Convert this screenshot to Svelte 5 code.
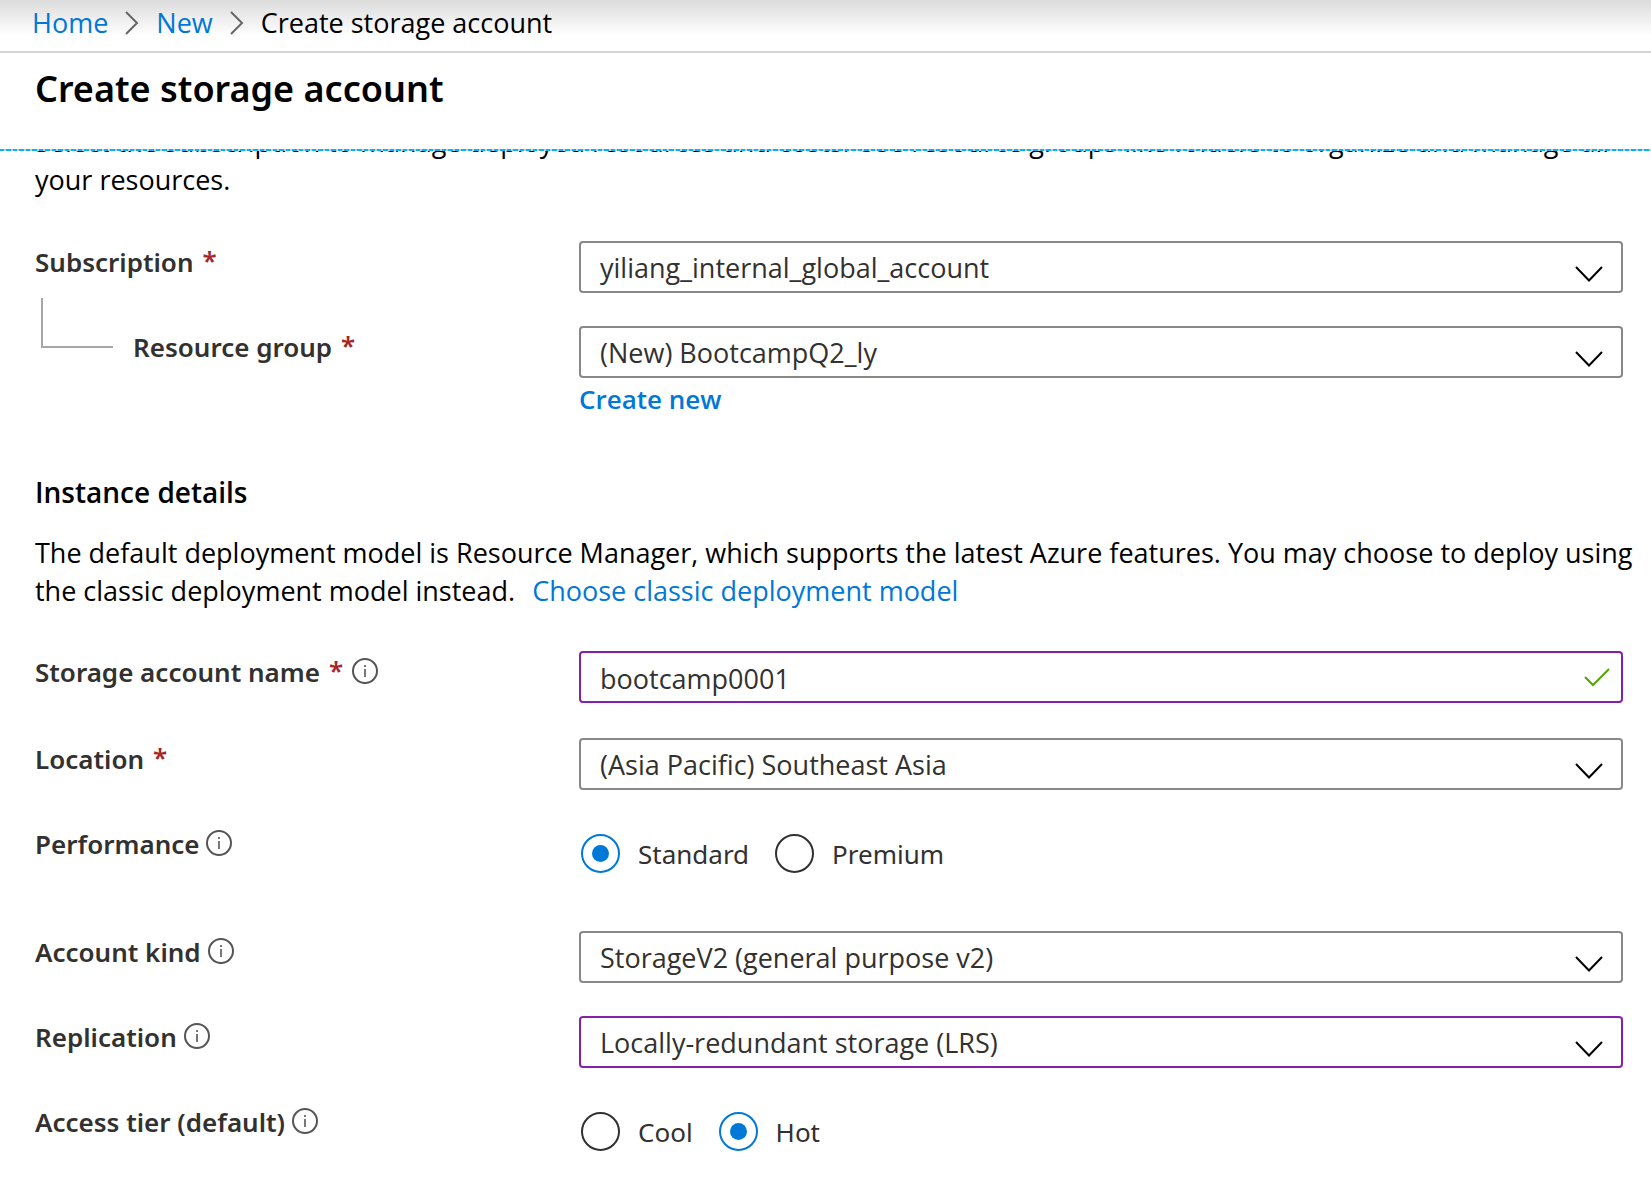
<script>
  let subscription = $state('yiliang_internal_global_account');
  let resourceGroup = $state('(New) BootcampQ2_ly');
  let accountName = $state('bootcamp0001');
  let location = $state('(Asia Pacific) Southeast Asia');
  let performance = $state('Standard');
  let kind = $state('StorageV2 (general purpose v2)');
  let replication = $state('Locally-redundant storage (LRS)');
  let tier = $state('Hot');
</script>

{#snippet info(topic)}
  <button type="button" class="info" aria-label="About {topic}">
    <svg viewBox="0 0 26 26" aria-hidden="true">
      <circle cx="13" cy="13" r="12" />
      <path d="M13 11v8M13 7v2" />
    </svg>
  </button>
{/snippet}

{#snippet chevron()}
  <svg class="chevron" viewBox="0 0 30 18" aria-hidden="true"><path d="M2 2l13 13.500L28 2" /></svg>
{/snippet}

{#snippet separator()}
  <svg class="separator" viewBox="0 0 14 24" aria-hidden="true"><path d="M1 1l11 11L1 23" /></svg>
{/snippet}

<header>
  <nav aria-label="Breadcrumb">
    <a href="#home">Home</a>
    {@render separator()}
    <a href="#new">New</a>
    {@render separator()}
    <span>Create storage account</span>
  </nav>
  <h1>Create storage account</h1>
  <div class="edge"></div>
</header>

<main>
  <p class="intro">
    Select the subscription to manage deployed resources and costs. Use resource groups like folders to organize and manage all your resources.
  </p>

  <div class="fields project">
    <div class="row">
      <div class="label"><label for="subscription">Subscription</label><span class="required">*</span></div>
      <div class="control">
        <select id="subscription" bind:value={subscription}><option>yiliang_internal_global_account</option></select>
        {@render chevron()}
      </div>
    </div>
    <div class="row">
      <div class="label nested"><label for="group">Resource group</label><span class="required">*</span></div>
      <div>
        <div class="control">
          <select id="group" bind:value={resourceGroup}><option>(New) BootcampQ2_ly</option></select>
          {@render chevron()}
        </div>
        <a class="create" href="#create">Create new</a>
      </div>
    </div>
  </div>

  <h2>Instance details</h2>
  <p class="model">
    The default deployment model is Resource Manager, which supports the latest Azure features. You may choose to deploy using the classic deployment model instead.
    <a href="#classic">Choose classic deployment model</a>
  </p>

  <div class="fields">
    <div class="row name">
      <div class="label"><label for="name">Storage account name</label><span class="required">*</span>{@render info('storage account name')}</div>
      <div class="control">
        <input id="name" class="edited" type="text" bind:value={accountName} />
        <svg class="check" viewBox="0 0 28 20" aria-hidden="true"><path d="M2 10l8 8L26 2" /></svg>
      </div>
    </div>
    <div class="row">
      <div class="label"><label for="location">Location</label><span class="required">*</span></div>
      <div class="control">
        <select id="location" bind:value={location}><option>(Asia Pacific) Southeast Asia</option></select>
        {@render chevron()}
      </div>
    </div>
    <div class="row tall">
      <div class="label"><span id="performance">Performance</span>{@render info('performance')}</div>
      <div class="choices" role="radiogroup" aria-labelledby="performance">
        {#each ['Standard', 'Premium'] as option}
          <label><input type="radio" name="performance" value={option} bind:group={performance} />{option}</label>
        {/each}
      </div>
    </div>
    <div class="row">
      <div class="label"><label for="kind">Account kind</label>{@render info('account kind')}</div>
      <div class="control">
        <select id="kind" bind:value={kind}><option>StorageV2 (general purpose v2)</option></select>
        {@render chevron()}
      </div>
    </div>
    <div class="row">
      <div class="label"><label for="replication">Replication</label>{@render info('replication')}</div>
      <div class="control">
        <select id="replication" class="edited" bind:value={replication}><option>Locally-redundant storage (LRS)</option></select>
        {@render chevron()}
      </div>
    </div>
    <div class="row">
      <div class="label"><span id="tier">Access tier (default)</span>{@render info('access tier')}</div>
      <div class="choices" role="radiogroup" aria-labelledby="tier">
        {#each ['Cool', 'Hot'] as option}
          <label><input type="radio" name="tier" value={option} bind:group={tier} />{option}</label>
        {/each}
      </div>
    </div>
  </div>
</main>

<style>
  :global(body) {
    margin: 0;
    background: #fff;
    color: #000;
    font: 27px/38px 'Open Sans', 'Noto Sans', sans-serif;
  }

  svg {
    fill: none;
    stroke: currentColor;
  }

  a {
    color: #0078d7;
    text-decoration: none;
  }

  nav {
    display: flex;
    align-items: center;
    gap: 17px;
    height: 53px;
    padding: 0 32px 5px;
    box-sizing: border-box;
    border-bottom: 2px solid #d4d4d4;
    background: linear-gradient(#dcdcdc, #fff 36px);
  }

  .separator {
    width: 14px;
    height: 24px;
    color: #666;
    stroke-width: 2;
  }

  .edge {
    height: 2px;
    background: repeating-linear-gradient(90deg, #00b7f4 0 4px, #ccc 4px 6px, #00b7f4 6px 11px, #ccc 11px 13px);
  }

  h1 {
    margin: 0;
    padding: 12px 35px 36px;
    font-family: 'Noto Sans', sans-serif;
    font-size: 36px;
    font-weight: 600;
    line-height: 48px;
  }

  main {
    overflow: hidden;
    padding: 0 28px 24px 35px;
  }

  .intro {
    margin: -28px 0 0;
  }

  .project {
    margin-top: 42px;
  }

  .fields {
    display: flex;
    flex-direction: column;
    gap: 33px;
  }

  .row {
    display: grid;
    grid-template-columns: 544px 1fr;
    min-height: 52px;
  }

  .name {
    min-height: 54px;
  }

  .tall {
    min-height: 75px;
  }

  .label {
    display: flex;
    align-self: start;
    align-items: center;
    gap: 7px;
    padding-top: 2px;
    color: #323130;
    font-family: 'Noto Sans', sans-serif;
    font-size: 26px;
    font-weight: 600;
  }

  .required {
    padding: 0 2px 4px;
    color: #a4262c;
    line-height: 34px;
  }

  .nested {
    position: relative;
    padding-left: 98px;
  }

  .nested::before {
    content: '';
    position: absolute;
    left: 6px;
    bottom: 18px;
    width: 70px;
    height: 48px;
    border-left: 2px solid #a6a6a6;
    border-bottom: 2px solid #a6a6a6;
  }

  .info {
    width: 26px;
    height: 28px;
    padding: 0 0 2px;
    border: 0;
    background: none;
    color: #555;
  }

  .info svg {
    display: block;
    stroke-width: 2;
  }

  .info path {
    stroke: #777;
  }

  .control {
    position: relative;
  }

  select,
  input[type='text'] {
    display: block;
    box-sizing: border-box;
    width: 100%;
    height: 52px;
    padding: 2px 60px 0 19px;
    border: 2px solid #8a8886;
    border-radius: 4px;
    appearance: none;
    background: #fff;
    color: #323130;
    font: inherit;
  }

  .edited,
  input.edited {
    border-color: #881fa8;
  }

  .chevron,
  .check {
    position: absolute;
    pointer-events: none;
    stroke-width: 2;
  }

  .chevron {
    right: 19px;
    bottom: 10px;
    width: 30px;
    height: 18px;
  }

  .check {
    top: 16px;
    right: 12px;
    width: 28px;
    height: 20px;
    color: #57a300;
  }

  .create {
    display: block;
    padding-top: 2px;
    font-size: 26px;
    font-weight: 600;
  }

  h2 {
    margin: 55px 0 23px;
    font-size: 28px;
    font-weight: 600;
    line-height: 38px;
  }

  .model {
    margin: 0 -16px 41px 0;
  }

  .model a {
    margin-left: 10px;
  }

  .choices {
    display: flex;
    align-self: start;
    gap: 26px;
    padding: 11px 2px 0;
    color: #323130;
    font-family: 'Noto Sans', sans-serif;
    font-size: 26px;
  }

  .choices label {
    display: flex;
    align-items: center;
    gap: 18px;
  }

  input[type='radio'] {
    display: grid;
    place-items: center;
    box-sizing: border-box;
    width: 39px;
    height: 39px;
    margin: 0;
    border: 2px solid #323130;
    border-radius: 50%;
    appearance: none;
  }

  input[type='radio']:checked {
    border-color: #0078d7;
  }

  input[type='radio']:checked::before {
    content: '';
    width: 17px;
    height: 17px;
    border-radius: 50%;
    background: #0078d7;
  }
</style>
